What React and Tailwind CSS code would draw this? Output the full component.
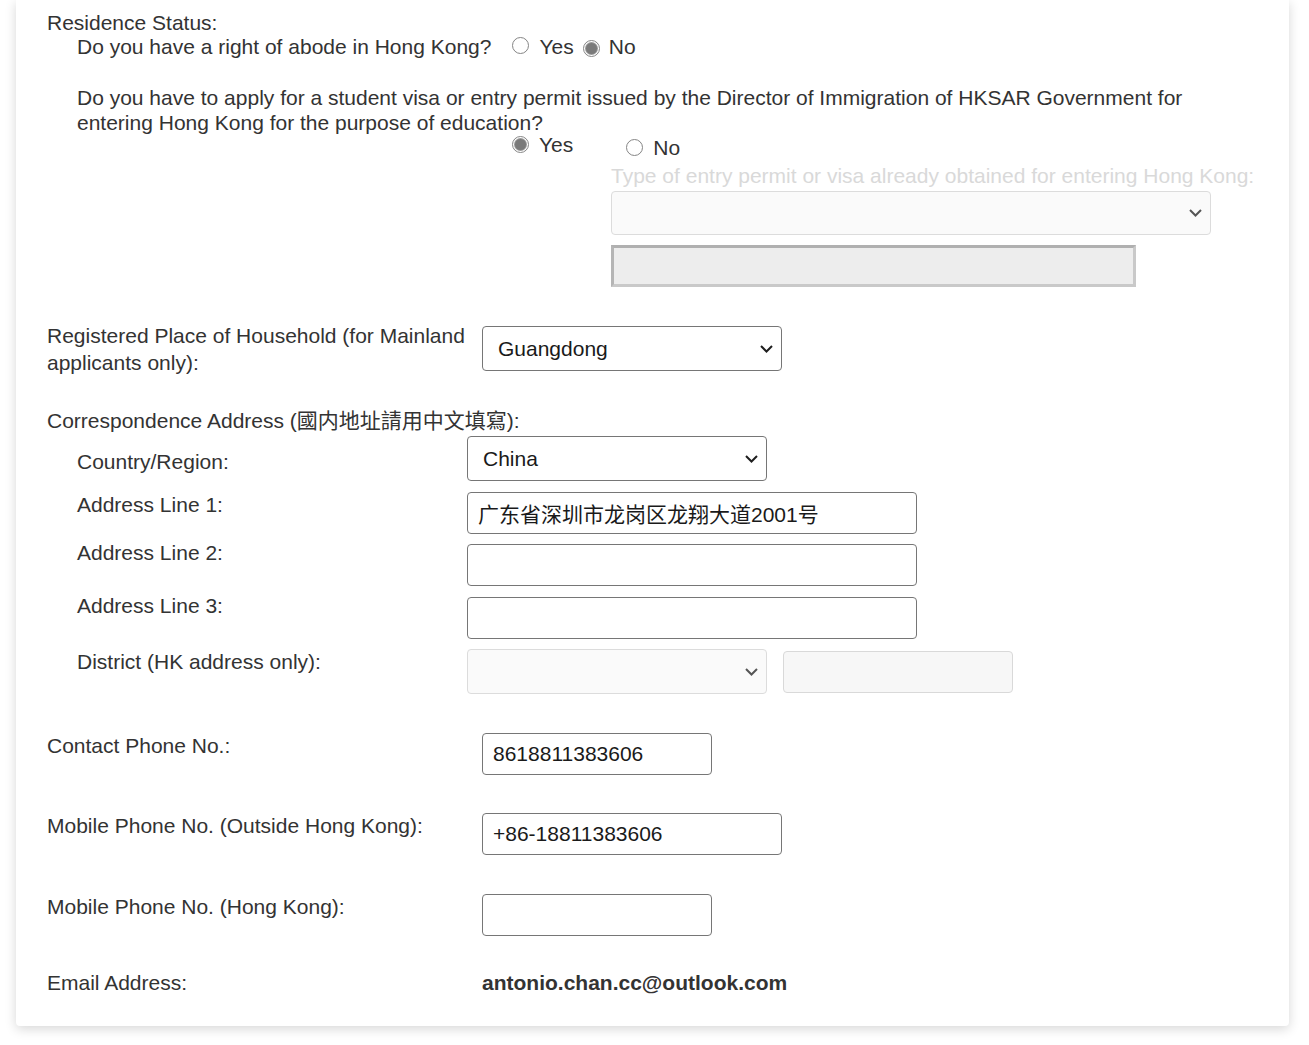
import React from 'react';

const FONT = { fontFamily: '"Liberation Sans", Arial, "Noto Sans CJK SC", sans-serif' };

function Radio({ checked }) {
  return (
    <span className="inline-flex h-[17px] w-[17px] shrink-0 items-center justify-center rounded-full border border-[#858585] bg-white">
      {checked && <span className="h-[11px] w-[11px] rounded-full bg-[#7a7a7a] ring-1 ring-[#9a9a9a]" />}
    </span>
  );
}

function Chevron({ muted }) {
  return (
    <svg width="13" height="8" viewBox="0 0 13 8" className="shrink-0">
      <polyline points="1,1 6.5,6.5 12,1" fill="none" stroke={muted ? '#555' : '#1e1e1e'} strokeWidth="2" />
    </svg>
  );
}

function Select({ value, className = '', disabled }) {
  return (
    <div
      className={
        'flex shrink-0 items-center justify-between rounded-[4px] border pr-[8px] text-[21px] ' +
        (disabled ? 'border-[#dcdcdc] bg-[#fafafa]' : 'border-[#767676] bg-white text-[#1a1a1a]') +
        ' ' +
        className
      }
    >
      <span className="pl-[15px]">{value}</span>
      <Chevron muted={disabled} />
    </div>
  );
}

function TextBox({ value = '', className = '', disabled }) {
  return (
    <input
      readOnly
      value={value}
      className={
        'block shrink-0 rounded-[4px] border px-[10px] text-[21px] outline-none ' +
        (disabled ? 'border-[#d9d9d9] bg-[#f7f7f7]' : 'border-[#767676] bg-white text-[#1a1a1a]') +
        ' ' +
        className
      }
      style={FONT}
    />
  );
}

export default function App() {
  return (
    <div className="min-h-[1045px] bg-white" style={FONT}>
      <div className="ml-[16px] w-[1273px] rounded-b-[4px] bg-white pb-[31px] pl-[31px] pr-[31px] pt-[10px] text-[21px] leading-[25px] text-[#333] shadow-[0_3px_12px_rgba(0,0,0,0.16)]">
        <div>Residence Status:</div>

        <div className="pl-[30px]">
          <div className="-mt-[1px] flex items-center">
            <span>Do you have a right of abode in Hong Kong?</span>
            <span className="ml-[21px]"><Radio /></span>
            <span className="ml-[10px]">Yes</span>
            <span className="ml-[9px]"><Radio checked /></span>
            <span className="ml-[9px]">No</span>
          </div>

          <div className="mt-[26px]">
            Do you have to apply for a student visa or entry permit issued by the Director of Immigration of HKSAR Government for
            <br />
            entering Hong Kong for the purpose of education?
          </div>

          <div className="-mt-[3px] flex h-[31px] items-start pl-[435px]">
            <div className="flex items-center">
              <Radio checked />
              <span className="ml-[10px]">Yes</span>
            </div>
            <div className="ml-[53px] mt-[3px] flex items-center">
              <Radio />
              <span className="ml-[10px]">No</span>
            </div>
          </div>

          <div className="pl-[534px]">
            <div className="whitespace-nowrap text-[#d9d9d9]">Type of entry permit or visa already obtained for entering Hong Kong:</div>
            <Select disabled value="" className="mt-[3px] h-[44px] w-[600px]" />
            <div className="mt-[10px] h-[42px] w-[525px] border-[3px] border-b-[#c9c9c9] border-l-[#b5b5b5] border-r-[#c9c9c9] border-t-[#b0b0b0] bg-[#ededed]" />
          </div>
        </div>

        <div className="mt-[35px] flex items-start">
          <div className="w-[435px] shrink-0 leading-[27px]">Registered Place of Household (for Mainland applicants only):</div>
          <Select value="Guangdong" className="mt-[4px] h-[45px] w-[300px]" />
        </div>

        <div className="mt-[32px]">Correspondence Address (國内地址請用中文填寫):</div>

        <div className="pl-[30px]">
          <div className="mt-[3px] flex items-start">
            <div className="mt-[13px] w-[390px] shrink-0">Country/Region:</div>
            <Select value="China" className="h-[45px] w-[300px]" />
          </div>
          <div className="mt-[11px] flex items-start">
            <div className="w-[390px] shrink-0">Address Line 1:</div>
            <TextBox value="广东省深圳市龙岗区龙翔大道2001号" className="h-[42px] w-[450px]" />
          </div>
          <div className="mt-[10px] flex items-start">
            <div className="-mt-[4px] w-[390px] shrink-0">Address Line 2:</div>
            <TextBox className="h-[42px] w-[450px]" />
          </div>
          <div className="mt-[11px] flex items-start">
            <div className="-mt-[4px] w-[390px] shrink-0">Address Line 3:</div>
            <TextBox className="h-[42px] w-[450px]" />
          </div>
          <div className="mt-[10px] flex items-start">
            <div className="w-[390px] shrink-0">District (HK address only):</div>
            <Select disabled value="" className="h-[45px] w-[300px]" />
            <TextBox disabled className="ml-[16px] mt-[2px] h-[42px] w-[230px]" />
          </div>
        </div>

        <div className="mt-[39px] flex items-start">
          <div className="w-[435px] shrink-0">Contact Phone No.:</div>
          <TextBox value="8618811383606" className="h-[42px] w-[230px]" />
        </div>

        <div className="mt-[38px] flex items-start">
          <div className="w-[435px] shrink-0">Mobile Phone No. (Outside Hong Kong):</div>
          <TextBox value="+86-18811383606" className="h-[42px] w-[300px]" />
        </div>

        <div className="mt-[39px] flex items-start">
          <div className="w-[435px] shrink-0">Mobile Phone No. (Hong Kong):</div>
          <TextBox className="h-[42px] w-[230px]" />
        </div>

        <div className="mt-[34px] flex items-start">
          <div className="w-[435px] shrink-0">Email Address:</div>
          <div className="font-bold">antonio.chan.cc@outlook.com</div>
        </div>
      </div>
    </div>
  );
}
